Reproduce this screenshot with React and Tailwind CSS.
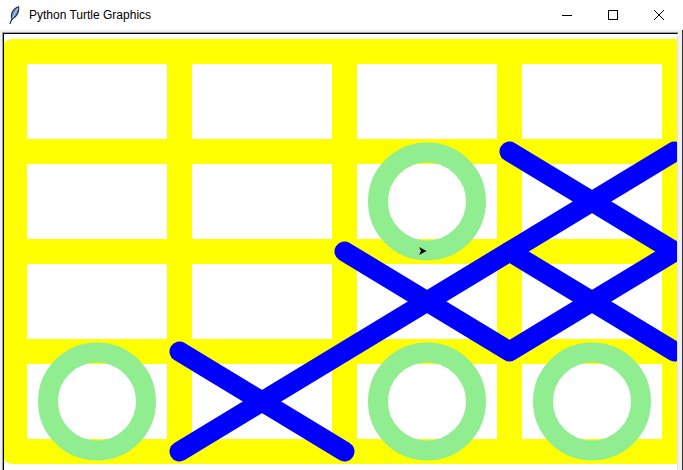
import React from 'react';

// canvas is drawn in page coordinates (viewBox offset by the frame)
const ROWS = [0, 1, 2, 3];
const COLS = [0, 1, 2, 3];

const rings = [
  { cx: 427, cy: 201.5 },
  { cx: 97, cy: 401.5 },
  { cx: 427, cy: 401.5 },
  { cx: 592, cy: 401.5 },
];

const crosses = [
  'M179.5 351.5 L344.5 451.5',
  'M179.5 451.5 L674.5 151.5',
  'M344.5 251.5 L509.5 351.5 L674.5 251.5',
  'M509.5 151.5 L674.5 251.5',
  'M509.5 251.5 L674.5 351.5',
];

const Feather = () => (
  <svg width="12" height="18" viewBox="0 0 12 18">
    <path d="M2 17.5 L4.5 12" stroke="#1b2740" strokeWidth="1.2" strokeLinecap="round" />
    <path d="M4.2 13 C2.2 9 4 3.2 10.6 0.8 C11.4 5 9.6 10.6 4.2 13 Z" fill="#6d8fbf" stroke="#1b2740" strokeWidth="1.1" />
    <path d="M4.6 12 C6 8.5 7.8 5 10 1.8" stroke="#d7e3f3" strokeWidth="0.9" fill="none" />
  </svg>
);

const TitleBar = () => (
  <div className="flex h-[30px] items-center bg-white pr-[1px]">
    <div className="pl-[8px]">
      <Feather />
    </div>
    <span
      className="ml-[9px] text-[12px] leading-none text-black"
      style={{ fontFamily: '"Liberation Sans", Arial, sans-serif' }}
    >
      Python Turtle Graphics
    </span>
    <div className="flex-1" />
    <div className="flex h-[30px] w-[46px] items-center justify-center">
      <svg width="10" height="10" viewBox="0 0 10 10">
        <path d="M0 5.5 H10" stroke="#000" strokeWidth="1" />
      </svg>
    </div>
    <div className="flex h-[30px] w-[46px] items-center justify-center">
      <svg width="10" height="10" viewBox="0 0 10 10">
        <rect x="0.5" y="0.5" width="9" height="9" fill="none" stroke="#000" strokeWidth="1" />
      </svg>
    </div>
    <div className="flex h-[30px] w-[46px] items-center justify-center">
      <svg width="10" height="10" viewBox="0 0 10 10">
        <path d="M0 0 L10 10 M10 0 L0 10" stroke="#000" strokeWidth="1" />
      </svg>
    </div>
  </div>
);

const Board = () => (
  <svg width="673" height="436" viewBox="4 34 673 436" className="block bg-white">
    <rect x="2" y="39" width="685" height="425" rx="10" fill="#ffff00" />
    {ROWS.map((r) =>
      COLS.map((c) => (
        <rect
          key={`${r}-${c}`}
          x={27 + 165 * c}
          y={64 + 100 * r}
          width="140"
          height="75"
          fill="#ffffff"
          shapeRendering="crispEdges"
        />
      ))
    )}
    {rings.map((g, i) => (
      <circle key={i} cx={g.cx} cy={g.cy} r="49" fill="none" stroke="#90ee90" strokeWidth="20" />
    ))}
    {crosses.map((d, i) => (
      <path
        key={i}
        d={d}
        fill="none"
        stroke="#0000ff"
        strokeWidth="20"
        strokeLinecap="round"
        strokeLinejoin="round"
      />
    ))}
    {/* turtle cursor */}
    <polygon points="426.5,251 419,247 421,251 419,255" fill="#000" />
  </svg>
);

export default function App() {
  return (
    <div className="flex h-[470px] w-[683px] flex-col overflow-hidden bg-white">
      <TitleBar />
      <div className="flex h-[440px] overflow-hidden border-r border-[#2b2d3a] bg-[#f0f0f0] pl-[2px] pt-[2px]">
        <div className="border-l border-t border-[#a0a0a0]">
          <div className="border-l border-r border-t border-l-black border-t-black border-r-[#e3e3e3]">
            <Board />
          </div>
        </div>
      </div>
    </div>
  );
}
